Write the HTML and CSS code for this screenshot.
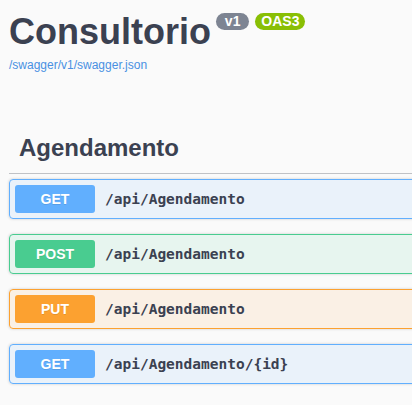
FILE: index.html
```html
<!DOCTYPE html>
<html lang="pt">
<head>
<meta charset="utf-8">
<title>Consultorio</title>
<link rel="stylesheet" href="styles.css">
</head>
<body>
<div class="wrapper">
  <div class="info">
    <h1 class="title">
      <span class="title-text">Consultorio</span>
      <span class="badge badge-version"> v1 </span>
      <span class="badge badge-oas">OAS3</span>
    </h1>
    <a class="spec-link" href="#">/swagger/v1/swagger.json</a>
  </div>

  <section class="tag-section">
    <h3 class="tag-title">Agendamento</h3>

    <div class="opblock opblock-get">
      <div class="summary">
        <span class="method">GET</span>
        <span class="path">/api/Agendamento</span>
      </div>
    </div>

    <div class="opblock opblock-post">
      <div class="summary">
        <span class="method">POST</span>
        <span class="path">/api/Agendamento</span>
      </div>
    </div>

    <div class="opblock opblock-put">
      <div class="summary">
        <span class="method">PUT</span>
        <span class="path">/api/Agendamento</span>
      </div>
    </div>

    <div class="opblock opblock-get">
      <div class="summary">
        <span class="method">GET</span>
        <span class="path">/api/Agendamento/{id}</span>
      </div>
    </div>
  </section>
</div>
</body>
</html>
```

FILE: styles.css
```css
html, body {
  margin: 0;
  padding: 0;
  background: #fafafa;
  overflow: hidden;
}

body {
  font-family: "Liberation Sans", Arial, sans-serif;
  color: #3b4151;
}

.wrapper {
  width: 760px;
  padding: 12px 0 0 9px;
  box-sizing: border-box;
}

.title {
  display: flex;
  align-items: flex-start;
  gap: 5px;
  margin: 0;
  font-size: 36px;
  line-height: 40px;
  font-weight: 700;
  color: #3b4151;
}

.badge {
  margin-top: 1px;
  height: 17px;
  padding: 0 5px;
  border-radius: 57px;
  font-size: 14px;
  line-height: 17px;
  font-weight: 700;
  color: #fff;
  white-space: pre;
}

.badge-version {
  background: #7d8492;
}

.badge-oas {
  margin-left: 1px;
  padding: 0 6px;
  background: #89bf04;
}

.spec-link {
  display: block;
  margin-top: 6px;
  font-size: 12px;
  line-height: 15px;
  color: #4990e2;
  text-decoration: none;
}

.tag-section {
  margin-top: 49px;
}

.tag-title {
  margin: 0 0 5px;
  padding: 10px 20px 10px 10px;
  font-size: 24px;
  line-height: 31px;
  font-weight: 700;
  color: #3b4151;
  border-bottom: 1px solid rgba(59, 65, 81, 0.3);
}

.opblock {
  margin: 0 0 15px;
  border: 1px solid;
  border-radius: 4px;
  box-shadow: 0 0 3px rgba(0, 0, 0, 0.19);
}

.summary {
  display: flex;
  align-items: center;
  padding: 5px;
}

.method {
  min-width: 80px;
  padding: 6px 0;
  border-radius: 3px;
  font-size: 14px;
  line-height: 16px;
  font-weight: 700;
  text-align: center;
  color: #fff;
  text-shadow: 0 1px 0 rgba(0, 0, 0, 0.1);
}

.path {
  padding: 0 10px;
  font-family: "DejaVu Sans Mono", "Liberation Mono", monospace;
  font-size: 14.5px;
  font-weight: 700;
  color: #3b4151;
}

.opblock-get {
  border-color: #61affe;
  background: rgba(97, 175, 254, 0.1);
}
.opblock-get .method { background: #61affe; }

.opblock-post {
  border-color: #49cc90;
  background: rgba(73, 204, 144, 0.1);
}
.opblock-post .method { background: #49cc90; }

.opblock-put {
  border-color: #fca130;
  background: rgba(252, 161, 48, 0.1);
}
.opblock-put .method { background: #fca130; }
```
